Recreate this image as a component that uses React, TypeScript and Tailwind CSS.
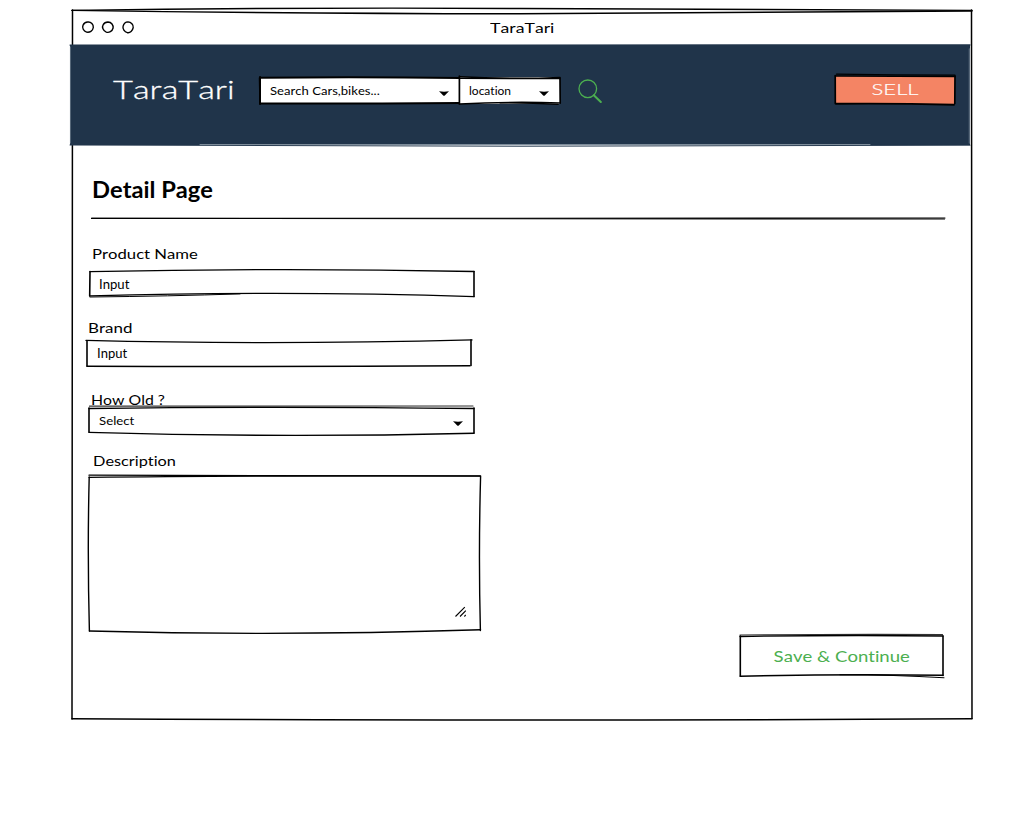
import type { ReactNode } from "react";

type Stroke = { d: string; w?: number; o?: number };

/* Hand-drawn outline laid over a box; viewBox carries the box's origin and size. */
function Outline({ box, strokes, color = "#000" }: { box: string; strokes: Stroke[]; color?: string }) {
  return (
    <svg
      viewBox={box}
      className="pointer-events-none absolute inset-0 h-full w-full overflow-visible"
      fill="none"
      stroke={color}
      strokeLinecap="round"
      aria-hidden="true"
    >
      {strokes.map((s) => (
        <path key={s.d} d={s.d} strokeWidth={s.w ?? 1.3} opacity={s.o ?? 1} />
      ))}
    </svg>
  );
}

function Ink({ className, children }: { className: string; children: ReactNode }) {
  return <span className={`block w-max origin-left whitespace-pre ${className}`}>{children}</span>;
}

function Caret() {
  return (
    <svg width="10" height="5" viewBox="0 0 10 5" className="shrink-0" aria-hidden="true">
      <path d="M0 .3Q5 1.2 10 .3Q8 2 5.8 4.4Q5 5 4.2 4.4Q2 2 0 .3Z" fill="#000" />
    </svg>
  );
}

export default function App() {
  return (
    <div className="h-[829px] w-[1022px] overflow-hidden bg-white pt-[10px] pl-[72px] font-[Lato,sans-serif] text-black [font-kerning:none] [font-variant-ligatures:none]">
      <div className="relative flex h-[709px] w-[900px] flex-col">
        <Outline
          box="72 10 900 709"
          strokes={[
            { d: "M72 10.4Q300 7.2 520 8.5Q760 8.7 972 10.4", w: 1.4 },
            { d: "M72 10.4Q290 13.5 520 13.8Q760 12.8 972 11", w: 1.4 },
            { d: "M72.5 10Q73 350 72 719", w: 1.5 },
            { d: "M971.5 10Q972 350 972 718.6", w: 1.5 },
            { d: "M72 718.7Q500 721.2 972 718.8", w: 1.5 },
          ]}
        />

        <div className="flex h-[35px] shrink-0 items-center">
          <svg width="54" height="14" viewBox="81 20 54 14" className="ml-[9px]" fill="none" stroke="#000" strokeWidth="1.4" aria-hidden="true">
            <path d="M88 21C91 20.7 93.6 23.7 93.3 26.5C92.8 30 89.7 31.7 86.6 31.1C83.5 30 81.9 26.8 83 24.2C84.1 21.7 86 20.9 88 21Z" />
            <path d="M108 21C111.5 21 113.5 24.2 113.1 27C112.2 30.5 109 31.9 106.3 31.1C103 29.8 101.7 26.2 103.2 23.7C104.3 21.7 106 21.1 108 21Z" />
            <path d="M128 20.9C131 21 133.7 23.7 133.2 26.7C132.7 29.7 130 32.2 127.4 31.7C124.5 30.9 122.3 27.8 123.1 25.1C123.8 22.6 126 21 128 20.9Z" />
          </svg>
          <Ink className="ml-[355px] scale-x-[1.36] text-[13px] leading-5">TaraTari</Ink>
        </div>

        <header className="relative -ml-[2px] flex h-[100px] w-[900px] shrink-0 bg-[#20344a]">
          <Outline
            box="70 45 900 100"
            color="#20344a"
            strokes={[
              { d: "M70 45.1Q500 44.6 970 44.9", w: 1.2 },
              { d: "M70 145Q520 147.3 970 145.2", w: 1 },
            ]}
          />
          <Outline
            box="70 45 900 100"
            color="#aab7c1"
            strokes={[
              { d: "M200 144.6L870 144.6", w: 1, o: 0.75 },
              { d: "M70.3 47V143", w: 1, o: 0.5 },
              { d: "M969.5 49V143", w: 1.6, o: 0.4 },
            ]}
          />
          <Ink className="mt-[28px] ml-[43px] scale-x-[1.375] text-[25px] leading-8 font-light text-white [-webkit-text-stroke:0.3px_white]">TaraTari</Ink>
          <div className="absolute top-[32px] left-[190px] flex h-[27px] w-[300px]">
            <div className="relative flex w-[200px] items-center justify-between bg-white pr-[11px] pl-[10px]">
              <Outline
                box="260 77 200 27"
                strokes={[
                  { d: "M260 77.7Q360 76.5 460 78", w: 2 },
                  { d: "M260 77V104", w: 2 },
                  { d: "M260 103.5Q360 103.7 460 103", w: 1.9 },
                  { d: "M259 78L259.5 90", w: 1, o: 0.5 },
                ]}
              />
              <Ink className="scale-x-[1.09] text-[12px] leading-4">Search Cars,bikes...</Ink>
              <div className="pt-[5px]"><Caret /></div>
            </div>
            <div className="relative flex w-[100px] items-center justify-between bg-white pr-[11px] pl-[9px]">
              <Outline
                box="460 77 100 27"
                strokes={[
                  { d: "M459.5 76.8Q510 79.5 560 77.5", w: 1.5 },
                  { d: "M460 78.3Q510 78.5 560 78.6", w: 1.4 },
                  { d: "M459.4 76V104", w: 1.7 },
                  { d: "M560 78L560.2 103", w: 1.7 },
                  { d: "M459.5 104Q510 101.4 560 103", w: 1.6 },
                  { d: "M500 102.7Q530 103 558 104.4", w: 1.4 },
                ]}
              />
              <Ink className="scale-x-[1.0] text-[12px] leading-4">location</Ink>
              <div className="pt-[5px]"><Caret /></div>
            </div>
          </div>
          <svg width="24" height="24" viewBox="578 79 24 24" className="absolute top-[34px] left-[508px]" fill="none" stroke="#4caf50" aria-label="Search">
            <circle cx="587.8" cy="88.8" r="8.8" strokeWidth="1.3" />
            <path d="M593.8 95.2L600.8 102" strokeWidth="2" strokeLinecap="round" />
          </svg>
          <button className="absolute top-[31px] left-[766px] flex h-[28px] w-[119px] items-center justify-center bg-[#f48464] text-white">
            <Outline
              box="836 76 119 28"
              strokes={[
                { d: "M836.5 74.2Q895 75 955 75.2", w: 1.2 },
                { d: "M835.5 76Q895 76 955 76.4", w: 1.5 },
                { d: "M835.2 75.5L835.3 103.5", w: 1.7 },
                { d: "M955 76L954.8 103.5", w: 1.7 },
                { d: "M836 103.8Q895 103.2 954 104.8", w: 1.9 },
              ]}
            />
            <span className="-mt-[2px] block scale-x-[1.38] text-[16px] leading-5 font-light [-webkit-text-stroke:0.2px_white]">SELL</span>
          </button>
        </header>

        <main className="flex min-h-0 flex-1 flex-col">
          <h1 className="mt-[32px] ml-[20px]">
            <Ink className="scale-x-[1.03] text-[23px] leading-6 font-bold">Detail Page</Ink>
          </h1>
          <div className="relative mt-[16px] ml-[19px] h-[2px] w-[854px] shrink-0">
            <Outline
              box="91 217 854 2"
              strokes={[
                { d: "M91.5 218.4Q520 217.4 945 218", w: 1.1 },
                { d: "M91.5 218.4Q520 218.6 944.5 219", w: 1.1 },
              ]}
            />
          </div>

          <label className="mt-[25px] ml-[20px]"><Ink className="scale-x-[1.19] text-[14px] leading-5">Product Name</Ink></label>
          <div className="relative mt-[7px] ml-[18px] flex h-[26px] w-[384px] shrink-0 items-center pl-[9px]">
            <Outline
              box="90 271 384 26"
              strokes={[
                { d: "M90 271.7Q280 267.5 474 271.5" },
                { d: "M90 271.5L89.7 296", w: 1.6 },
                { d: "M474 271.5V296.5", w: 1.6 },
                { d: "M90 295.9Q290 290.5 474 296.7" },
                { d: "M90 297Q170 296.2 240 293.9", w: 1 },
              ]}
            />
            <Ink className="scale-x-[1.01] text-[13px] leading-4">Input</Ink>
          </div>

          <label className="mt-[21px] ml-[16px]"><Ink className="scale-x-[1.21] text-[14px] leading-5">Brand</Ink></label>
          <div className="relative mt-[2px] ml-[15px] flex h-[26px] w-[384px] shrink-0 items-center pl-[10px]">
            <Outline
              box="87 340 384 26"
              strokes={[
                { d: "M86 340.4Q270 345 472 339.9" },
                { d: "M87 341L87 366", w: 1.6 },
                { d: "M471 340L471 365.5", w: 1.6 },
                { d: "M87 366.3Q280 367 470 365.7", w: 1.6 },
              ]}
            />
            <Ink className="scale-x-[1.0] text-[13px] leading-4">Input</Ink>
          </div>

          <label className="mt-[24px] ml-[19px]"><Ink className="scale-x-[1.13] text-[14px] leading-5">How Old ?</Ink></label>
          <div className="relative -mt-[3px] ml-[17px] flex h-[26px] w-[385px] shrink-0 items-center justify-between pr-[11px] pl-[10px]">
            <Outline
              box="89 407 385 26"
              strokes={[
                { d: "M89.5 406.2Q280 405.5 473 406", w: 1.2, o: 0.8 },
                { d: "M89 408.5Q270 406.2 474 408.5" },
                { d: "M89 408L89 432", w: 1.6 },
                { d: "M474 408L474 433", w: 1.6 },
                { d: "M89 432.4Q280 438 474 433.2", w: 1.4 },
              ]}
            />
            <Ink className="scale-x-[1.1] pt-[2px] text-[12px] leading-4">Select</Ink>
            <div className="pt-[6px]"><Caret /></div>
          </div>

          <label className="mt-[18px] ml-[21px]"><Ink className="scale-x-[1.165] text-[14px] leading-5">Description</Ink></label>
          <div className="relative mt-[5px] ml-[17px] flex h-[155px] w-[391px] shrink-0 items-end justify-end pr-[14px] pb-[14px]">
            <Outline
              box="89 476 391 155"
              strokes={[
                { d: "M89 475.2Q280 475.4 480 476", w: 1.3 },
                { d: "M89 477.4Q240 475.5 480 476", w: 1.1 },
                { d: "M89.2 477Q87.3 552 89.4 631", w: 1.4 },
                { d: "M480.6 476Q478.4 554 480.4 630.5", w: 1.4 },
                { d: "M89.5 631Q280 636.3 480.5 629.8", w: 1.4 },
              ]}
            />
            <svg width="11" height="11" viewBox="455 606 11 11" fill="none" stroke="#000" strokeWidth="1.1" aria-hidden="true">
              <path d="M455.5 616.5L464.8 607.2M460 616.5L465.8 610.6M464.4 616.5L465.8 615" />
            </svg>
          </div>

          <button className="relative mt-[4px] mr-[29px] flex h-[41px] w-[203px] shrink-0 items-center justify-center self-end text-[#4caf50]">
            <Outline
              box="740 635 203 41"
              strokes={[
                { d: "M740 635Q840 634.2 942.5 634.6", w: 1.2, o: 0.8 },
                { d: "M740 636.5Q840 634.8 943 636", w: 1.3 },
                { d: "M740.3 636V675.5", w: 1.6 },
                { d: "M943 636V675.5", w: 1.6 },
                { d: "M740 676.2Q840 673.8 943 675.2", w: 1.4 },
                { d: "M840 674.8Q895 675 944 677.8", w: 1.1 },
              ]}
            />
            <span className="block scale-x-[1.16] whitespace-nowrap text-[16px] leading-5">Save &amp; Continue</span>
          </button>
        </main>
      </div>
    </div>
  );
}
